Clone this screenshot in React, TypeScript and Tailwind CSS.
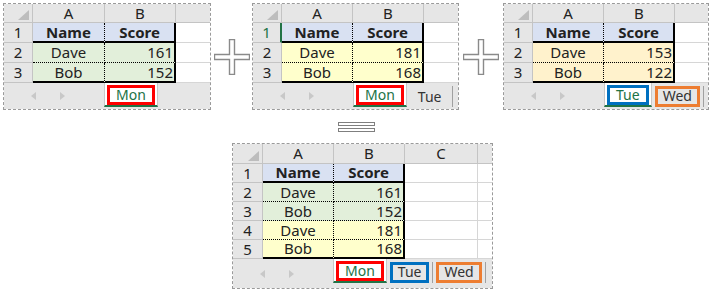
import React from 'react';

type Row = { name: string; score: string; fill: string; head?: boolean };
type TabDef = { label: string; active?: boolean; box?: string };
type Col = { w: string; label: string };

const HEAD_FILL = 'bg-[#d9e1f2]';
const GREEN = 'bg-[#e2efda]';
const YELLOW = 'bg-[#ffffcc]';
const ORANGE = 'bg-[#fff2cc]';

function Plus() {
  return (
    <svg width="36" height="36" viewBox="0 0 36 36">
      <path
        d="M15.5 0.5 H20.5 V15.5 H35.5 V20.5 H20.5 V35.5 H15.5 V20.5 H0.5 V15.5 H15.5 Z"
        fill="white"
        stroke="#8a8a8a"
        strokeWidth="1.4"
      />
    </svg>
  );
}

function Tabs({ tabs }: { tabs: TabDef[] }) {
  return (
    <div className="flex items-start">
      {tabs.map((t) =>
        t.active ? (
          <div
            key={t.label}
            className="h-[24px] px-[2px] pt-[2px] bg-white border-x border-x-[#c8c8c8] border-b-2 border-b-[#217346] flex justify-center"
          >
            <div
              className={`h-[20px] px-[6px] border-[3px] ${t.box} flex items-center justify-center text-[14px] text-[#217346] leading-[14px]`}
            >
              <span className="-mt-[1px]">{t.label}</span>
            </div>
          </div>
        ) : (
          <div key={t.label} className="pt-[3px]">
            <div className="h-[21px] flex items-center px-[3px] border-r border-r-[#a0a0a0]">
              {t.box ? (
                <div
                  className={`h-[21px] px-[5px] border-[3px] ${t.box} flex items-center text-[14px] text-[#333] leading-[14px]`}
                >
                  <span className="-mt-[1px]">{t.label}</span>
                </div>
              ) : (
                <div className="px-[8px] text-[14px] text-[#333] leading-[14px]">{t.label}</div>
              )}
            </div>
          </div>
        )
      )}
    </div>
  );
}

function Sheet({
  outer,
  rh,
  cols,
  extra,
  rows,
  headH,
  rowH,
  tabH,
  tabs,
  sel,
}: {
  outer: string;
  rh: string;
  cols: Col[];
  extra: Col[];
  rows: Row[];
  headH: string;
  rowH: string;
  tabH: string;
  tabs: TabDef[];
  sel?: boolean;
}) {
  const n = rows.length;
  return (
    <div className={`${outer} shrink-0 border border-dashed border-[#9a9a9a] flex flex-col text-[#222]`}>
      {/* column headers */}
      <div className={`flex ${headH} bg-[#e6e6e6] text-[15px] leading-[15px]`}>
        <div className={`${rh} shrink-0 border-r border-b border-[#c4c4c4] flex items-end justify-end pr-[3px] pb-[2px]`}>
          <div className="w-[11px] h-[10px] bg-[#bdbdbd] [clip-path:polygon(100%_0,100%_100%,0_100%)]" />
        </div>
        {cols.map((c) => (
          <div key={c.label} className={`${c.w} shrink-0 border-r border-b border-[#c4c4c4] flex items-center justify-center`}>
            {c.label}
          </div>
        ))}
        {extra.map((c, j) => (
          <div
            key={j}
            className={`${c.w} border-b border-[#c4c4c4] flex items-center justify-center ${j < extra.length - 1 ? 'border-r' : ''}`}
          >
            {c.label}
          </div>
        ))}
      </div>

      {rows.map((r, i) => {
        const thick = i === 0 || i === n - 1;
        const bottom = thick ? 'border-b-2 border-b-black' : 'border-b border-b-black [border-bottom-style:dotted]';
        const selected = sel && i === 0;
        return (
          <div key={i} className={`flex ${rowH} text-[15px] leading-[15px]`}>
            <div
              className={`${rh} shrink-0 bg-[#e6e6e6] border-b border-b-[#c4c4c4] flex items-center justify-center ${
                selected ? 'border-r-2 border-r-[#217346] text-[#217346]' : 'border-r border-r-[#c4c4c4]'
              }`}
            >
              {i + 1}
            </div>
            <div
              className={`${cols[0].w} shrink-0 ${r.fill} ${bottom} border-r border-r-black [border-right-style:dotted] flex items-center justify-center ${
                r.head ? 'font-bold' : ''
              }`}
            >
              {r.name}
            </div>
            <div
              className={`${cols[1].w} shrink-0 ${r.fill} ${bottom} border-r-2 border-r-black flex items-center ${
                r.head ? 'justify-center font-bold' : 'justify-end pr-[1px]'
              }`}
            >
              {r.score}
            </div>
            {extra.map((c, j) => (
              <div
                key={j}
                className={`${c.w} bg-white border-b border-[#d6d6d6] ${j < extra.length - 1 ? 'border-r' : ''}`}
              />
            ))}
          </div>
        );
      })}

      {/* sheet tab bar */}
      <div className={`flex ${tabH} bg-[#e6e6e6]`}>
        <div className="w-[100px] shrink-0 flex items-center">
          <div className="ml-[27px] w-0 h-0 border-y-[4px] border-y-transparent border-r-[5px] border-r-[#c8c8c8]" />
          <div className="ml-[24px] w-0 h-0 border-y-[4px] border-y-transparent border-l-[5px] border-l-[#c8c8c8]" />
        </div>
        <Tabs tabs={tabs} />
      </div>
    </div>
  );
}

const topCols: Col[] = [
  { w: 'w-[71px]', label: 'A' },
  { w: 'w-[71px]', label: 'B' },
];

export default function App() {
  return (
    <div className="w-[715px] h-[294px] bg-white font-['Noto_Sans',sans-serif] overflow-hidden pt-[3px]">
      <div className="flex items-center pl-[3px]">
        <Sheet
          outer="w-[208px]"
          rh="w-[29px]"
          cols={[
            { w: 'w-[72px]', label: 'A' },
            { w: 'w-[71px]', label: 'B' },
          ]}
          extra={[{ w: 'flex-1', label: '' }]}
          rows={[
            { name: 'Name', score: 'Score', fill: HEAD_FILL, head: true },
            { name: 'Dave', score: '161', fill: GREEN },
            { name: 'Bob', score: '152', fill: GREEN },
          ]}
          headH="h-[19px]"
          rowH="h-[20px]"
          tabH="h-[26px]"
          tabs={[{ label: 'Mon', active: true, box: 'border-[#ff0000]' }]}
        />
        <div className="w-[41px] flex justify-center">
          <Plus />
        </div>
        <Sheet
          outer="w-[207px]"
          rh="w-[29px]"
          cols={topCols}
          extra={[{ w: 'flex-1', label: '' }]}
          rows={[
            { name: 'Name', score: 'Score', fill: HEAD_FILL, head: true },
            { name: 'Dave', score: '181', fill: YELLOW },
            { name: 'Bob', score: '168', fill: YELLOW },
          ]}
          headH="h-[19px]"
          rowH="h-[20px]"
          tabH="h-[26px]"
          tabs={[
            { label: 'Mon', active: true, box: 'border-[#ff0000]' },
            { label: 'Tue' },
          ]}
          sel
        />
        <div className="w-[44px] flex justify-center">
          <Plus />
        </div>
        <Sheet
          outer="w-[206px]"
          rh="w-[29px]"
          cols={topCols}
          extra={[{ w: 'flex-1', label: '' }]}
          rows={[
            { name: 'Name', score: 'Score', fill: HEAD_FILL, head: true },
            { name: 'Dave', score: '153', fill: ORANGE },
            { name: 'Bob', score: '122', fill: ORANGE },
          ]}
          headH="h-[19px]"
          rowH="h-[20px]"
          tabH="h-[26px]"
          tabs={[
            { label: 'Tue', active: true, box: 'border-[#0070c0]' },
            { label: 'Wed', box: 'border-[#ed7d31]' },
          ]}
        />
      </div>

      {/* equals sign */}
      <div className="ml-[338px] mt-[12px] flex flex-col gap-[2px] w-[37px]">
        <div className="h-[4px] border border-[#7f7f7f]" />
        <div className="h-[4px] border border-[#7f7f7f]" />
      </div>

      <div className="ml-[232px] mt-[11px]">
        <Sheet
          outer="w-[261px]"
          rh="w-[30px]"
          cols={[
            { w: 'w-[71px]', label: 'A' },
            { w: 'w-[71px]', label: 'B' },
          ]}
          extra={[
            { w: 'w-[73px]', label: 'C' },
            { w: 'flex-1', label: '' },
          ]}
          rows={[
            { name: 'Name', score: 'Score', fill: HEAD_FILL, head: true },
            { name: 'Dave', score: '161', fill: GREEN },
            { name: 'Bob', score: '152', fill: GREEN },
            { name: 'Dave', score: '181', fill: YELLOW },
            { name: 'Bob', score: '168', fill: YELLOW },
          ]}
          headH="h-[20px]"
          rowH="h-[19px]"
          tabH="h-[29px]"
          tabs={[
            { label: 'Mon', active: true, box: 'border-[#ff0000]' },
            { label: 'Tue', box: 'border-[#0070c0]' },
            { label: 'Wed', box: 'border-[#ed7d31]' },
          ]}
        />
      </div>
    </div>
  );
}
